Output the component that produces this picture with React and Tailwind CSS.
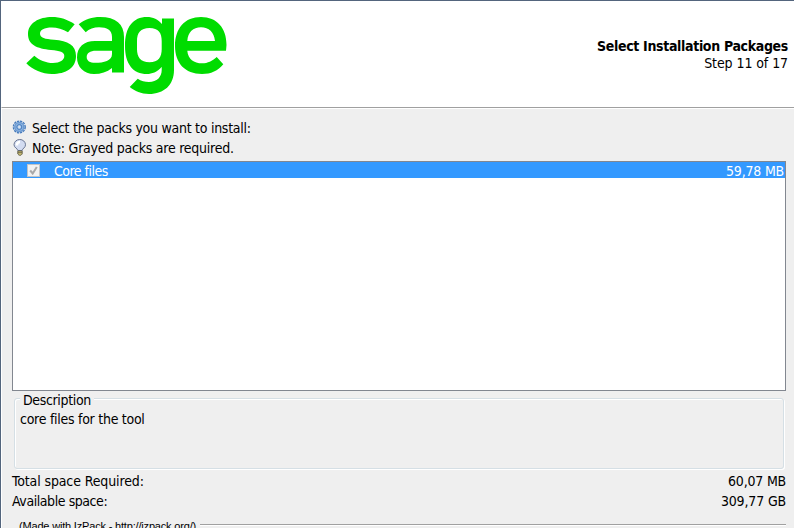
import React from "react";

const tahoma = "font-['DejaVu_Sans_Condensed','DejaVu_Sans',sans-serif]";

function SageLogo() {
  return (
    <svg className="block" width="202" height="80" viewBox="26 16 202 80" fill="#00dc00">
      <path d="M74.700 24.300 68 32.300C63 29 57 27.500 52 27.500C44 27.500 40 30 40 33.500C40 38 45 39 54 39.800C68 41 76 45 76 56C76 68 66 74 52 74C42 74 33 70 26.300 63.300L34.300 55.700C39 60 46 63 53 63C60 63 64.300 60 64.300 56C64.300 52 60 50.700 51 50C37 48.500 28 45 28 34C28 23 39 17 52 17C60 17 68 19.500 74.700 24.300Z" />
      <path fillRule="evenodd" d="M78.700 24.300C85 19 92 17 100 17C116 17 124 24 124 37V72.500H112V68C107 72 101 74 94 74C84 74 77 67 77 57.500C77 47 84 41 95 41H112V37C112 30 107 27.300 99 27.300C94 27.300 89 29 85.700 32.300ZM112 50.700H96C90 50.700 86.700 53 86.700 57C86.700 61 90 62.800 95 62.800C104 62.800 112 61 112 54Z" />
      <path fillRule="evenodd" d="M162 18.500H174V70C174 85 164 94 149 94C141 94 135 91 129.700 87L137.700 78.700C141 81 145 82 149 82C157 82 161.700 77 161.700 70V67C157 72 152 74 147 74C133 74 125 64 125 46C125 27 133 17 147 17C153 17 158 19.500 162 24ZM149.500 28C140.500 28 137 33 137 41V49C137 57 140.500 62.300 149.500 62.300C158.500 62.300 161.700 57 161.700 49V41C161.700 33 158.500 28 149.500 28Z" />
      <path fillRule="evenodd" d="M226 50.700H187.300C188 59 194 63.300 202 63.300C208 63.300 212 61 216.700 57L223.300 64.300C218 71 211 74 202 74C185 74 175 63 175 46C175 28 185 17 201 17C217 17 226.500 28 226.500 45ZM187.300 41H215C214 32 209 27.300 201 27.300C193 27.300 188 32 187.300 41Z" />
    </svg>
  );
}

function GearIcon() {
  return (
    <svg className="mb-[2px] block" width="14" height="14" viewBox="0 0 14 14">
      <circle cx="7.300" cy="7" r="5.900" fill="none" stroke="#4479bb" strokeWidth="1.400" strokeDasharray="2.300 0.789" />
      <circle cx="7.300" cy="7" r="4.500" fill="#8fb5e2" stroke="#6d9bd2" strokeWidth="1.500" />
      <circle cx="7.300" cy="7" r="2.500" fill="#a5c4ea" stroke="#477dbd" />
      <circle cx="7.300" cy="7" r="1.200" fill="#d8e2ef" />
    </svg>
  );
}

function BulbIcon() {
  return (
    <svg className="mb-[2px] block" width="14" height="17" viewBox="-1 0 14 17">
      <path d="M4.800 11.500C4.800 9.500 1 8.800 1 5.800a5.700 5.300 0 0 1 11.500 0c0 3-3.300 3.700-3.300 5.700Z" fill="#d3dcf1" stroke="#6b7794" />
      <path d="M3.800 6.500C3.800 4 5.500 3 7 3" fill="none" stroke="#fff" strokeWidth="2.600" />
      <path d="M4.800 12h4.400v3l-1.200 1.200h-2l-1.200-1.200Z" fill="#d5c979" stroke="#57533f" strokeWidth="0.800" />
      <path d="M4.800 13.700h4.400" stroke="#57533f" strokeWidth="0.800" />
    </svg>
  );
}

export default function App() {
  return (
    <div className={`${tahoma} flex h-[528px] w-[794px] flex-col overflow-hidden border-l border-t border-[#53657d] bg-[#efefef] text-[14px] leading-[20px] text-black`}>
      <header className="flex h-[107px] shrink-0 justify-between border-b border-l border-b-[#a0a0a0] border-l-white bg-white pl-[24px] pr-[6px] pt-[15px]">
        <SageLogo />
        <div className="flex flex-col items-end pt-[22px] leading-[17px]">
          <h1 className="whitespace-nowrap font-bold tracking-[-0.33px]">Select Installation Packages</h1>
          <p className="tracking-[-0.08px]">Step 11 of 17</p>
        </div>
      </header>
      <main className="flex flex-1 flex-col border-l border-t border-white pl-[10px] pr-[8px] pt-[9px]">
        <div className="flex h-[20px] shrink-0 items-center gap-[6px] tracking-[-0.27px]"><GearIcon /><span>Select the packs you want to install:</span></div>
        <div className="flex h-[20px] shrink-0 items-center gap-[6px] tracking-[-0.24px]"><BulbIcon /><span>Note: Grayed packs are required.</span></div>
        <section className="mt-[3px] h-[230px] shrink-0 border border-[#828790] bg-white">
          <div className="flex h-[16px] items-center bg-[#3399ff] pl-[14px] text-white">
            <div className="flex size-[13px] items-center justify-center border border-[#c0c4c8] bg-[#f2f2f2]">
              <svg width="9" height="9" viewBox="0 0 9 9"><path d="M1.200 4.500 3.700 7.500 7.800 1" fill="none" stroke="#a9a9a9" strokeWidth="2" /></svg>
            </div>
            <span className="ml-[14px] pt-[2px] tracking-[-0.5px]">Core files</span>
            <span className="ml-auto pr-px pt-[2px] tracking-[-0.2px]">59,78 MB</span>
          </div>
        </section>
        <fieldset className="-mt-[2px] ml-[2px] mr-[2px] h-[80px] shrink-0 rounded-[3px] border border-[#d5dfe5] px-[5px] shadow-[1px_1px_0_#fff,inset_1px_1px_0_#fff]">
          <legend className="bg-[#efefef] bg-clip-content pt-[4px] leading-[14px] tracking-[-0.35px]"><span className="px-[3px]">Description</span></legend>
          <p className="pt-[2px] leading-[20px] tracking-[-0.27px]">core files for the tool</p>
        </fieldset>
        <div className="mt-[2px] flex h-[20px] shrink-0 justify-between"><span className="tracking-[-0.12px]">Total space Required:</span><span className="tracking-[-0.2px]">60,07 MB</span></div>
        <div className="flex h-[20px] shrink-0 justify-between"><span className="tracking-[-0.43px]">Available space:</span><span className="tracking-[-0.15px]">309,77 GB</span></div>
        <footer className="mt-[8px] flex items-start pl-[7px] font-['Liberation_Sans',Arial,sans-serif] text-[11px] leading-[14px] tracking-[-0.18px]">
          <span className="whitespace-nowrap">(Made with IzPack - http://izpack.org/)</span>
          <div className="ml-[4px] mt-[5px] h-[2px] flex-1 border-b border-t border-b-white border-t-[#a0a0a0]" />
        </footer>
      </main>
    </div>
  );
}
